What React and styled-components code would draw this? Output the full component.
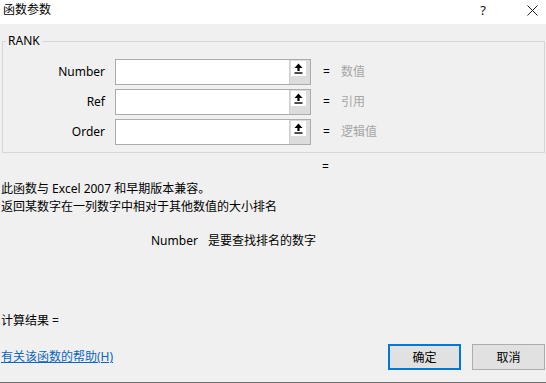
import React from "react";
import styled, { createGlobalStyle } from "styled-components";

const Global = createGlobalStyle`
  html, body { margin: 0; padding: 0; background: #f0f0f0; }
  body { font-family: "Noto Sans", "Noto Sans CJK SC", sans-serif; font-size: 12px; color: #000; }
  * { box-sizing: border-box; }
`;

const Dialog = styled.div`
  width: 546px;
  height: 383px;
  background: #f0f0f0;
  border-bottom: 1px solid #6e6e6e;
  display: flex;
  flex-direction: column;
  overflow: hidden;
`;

const TitleBar = styled.div`
  height: 24px;
  background: #fff;
  display: flex;
  align-items: flex-start;
  padding: 2px 0 0 3px;
  line-height: 16px;
  font-size: 12px;
`;

const Title = styled.div`
  flex: 1;
`;

const TitleButton = styled.div`
  width: 28px;
  height: 16px;
  margin-right: ${(p) => (p.$gap ? "21px" : "0")};
  display: flex;
  align-items: center;
  justify-content: center;
  font-size: 13px;
  line-height: 16px;
  color: #111;
`;

const Group = styled.fieldset`
  margin: 9px 1px 0 2px;
  padding: 10px 0 7px 0;
  border: 1px solid #d6d6d6;
  min-width: 0;
`;

const Legend = styled.legend`
  margin-left: 3px;
  padding: 0 2px;
  line-height: 16px;
  font-size: 12px;
`;

const Rows = styled.div`
  display: grid;
  grid-template-columns: 102px 196px auto;
  grid-auto-rows: 26px;
  column-gap: 10px;
  row-gap: 4px;
  align-items: center;
`;

const Label = styled.div`
  text-align: right;
  line-height: 26px;
`;

const InputBox = styled.div`
  height: 26px;
  border: 1px solid #acacac;
  background: #fff;
  display: flex;
`;

const InputField = styled.div`
  flex: 1;
`;

const RefButton = styled.div`
  width: 21px;
  background: #dcdcdc;
  border-left: 1px solid #cfcfcf;
  padding: 1px 0 0 1px;
`;

const IconFace = styled.div`
  width: 15px;
  height: 15px;
  background: #fff;
  display: flex;
  align-items: center;
  justify-content: center;
`;

const Result = styled.div`
  display: flex;
  gap: 11px;
  line-height: 26px;
  padding-left: 2px;
`;

const Muted = styled.span`
  color: #a6a6a6;
`;

const EqualLine = styled.div`
  margin-top: 5px;
  padding-left: 322px;
  line-height: 18px;
`;

const Desc = styled.div`
  margin-top: 4px;
  padding-left: 1px;
  line-height: 18px;
`;

const ArgHelp = styled.div`
  margin-top: 16px;
  padding-left: 151px;
  line-height: 18px;
  display: flex;
  gap: 10px;
`;

const ResultLine = styled.div`
  margin-top: 62px;
  padding-left: 1px;
  line-height: 18px;
`;

const Footer = styled.div`
  margin-top: 14px;
  display: flex;
  align-items: center;
  padding: 0 1px 0 1px;
`;

const HelpLink = styled.a`
  flex: 1;
  color: #0b66c2;
  text-decoration: underline;
  line-height: 18px;
  cursor: pointer;
`;

const Button = styled.button`
  width: 73px;
  height: 26px;
  margin-left: ${(p) => (p.$first ? "0" : "11px")};
  background: #e1e1e1;
  border: ${(p) => (p.$primary ? "2px solid #0078d7" : "1px solid #adadad")};
  font-family: "Noto Sans", "Noto Sans CJK SC", sans-serif;
  font-size: 12px;
  color: #000;
  padding: 0;
`;

const UpArrow = () => (
  <svg width="9" height="11" viewBox="0 0 9 11">
    <path d="M4.5 0.5 L8.5 5 L5.6 5 L5.6 8 L3.4 8 L3.4 5 L0.5 5 Z" fill="#000" />
    <rect x="0.5" y="9.3" width="8" height="1.4" fill="#000" />
  </svg>
);

const CloseIcon = () => (
  <svg width="11" height="11" viewBox="0 0 11 11">
    <path d="M0.5 0.5 L10.5 10.5 M10.5 0.5 L0.5 10.5" stroke="#222" strokeWidth="1" fill="none" />
  </svg>
);

const args = [
  { name: "Number", value: "数值" },
  { name: "Ref", value: "引用" },
  { name: "Order", value: "逻辑值" },
];

export default function App() {
  return (
    <>
      <Global />
      <Dialog>
        <TitleBar>
          <Title>函数参数</Title>
          <TitleButton $gap>?</TitleButton>
          <TitleButton>
            <CloseIcon />
          </TitleButton>
        </TitleBar>
        <Group>
          <Legend>RANK</Legend>
          <Rows>
            {args.map((a) => (
              <React.Fragment key={a.name}>
                <Label>{a.name}</Label>
                <InputBox>
                  <InputField />
                  <RefButton>
                    <IconFace>
                      <UpArrow />
                    </IconFace>
                  </RefButton>
                </InputBox>
                <Result>
                  <span>=</span>
                  <Muted>{a.value}</Muted>
                </Result>
              </React.Fragment>
            ))}
          </Rows>
        </Group>
        <EqualLine>=</EqualLine>
        <Desc>
          此函数与 Excel 2007 和早期版本兼容。
          <br />
          返回某数字在一列数字中相对于其他数值的大小排名
        </Desc>
        <ArgHelp>
          <span>Number</span>
          <span>是要查找排名的数字</span>
        </ArgHelp>
        <ResultLine>计算结果 =</ResultLine>
        <Footer>
          <HelpLink>有关该函数的帮助(H)</HelpLink>
          <Button $primary $first>确定</Button>
          <Button>取消</Button>
        </Footer>
      </Dialog>
    </>
  );
}
